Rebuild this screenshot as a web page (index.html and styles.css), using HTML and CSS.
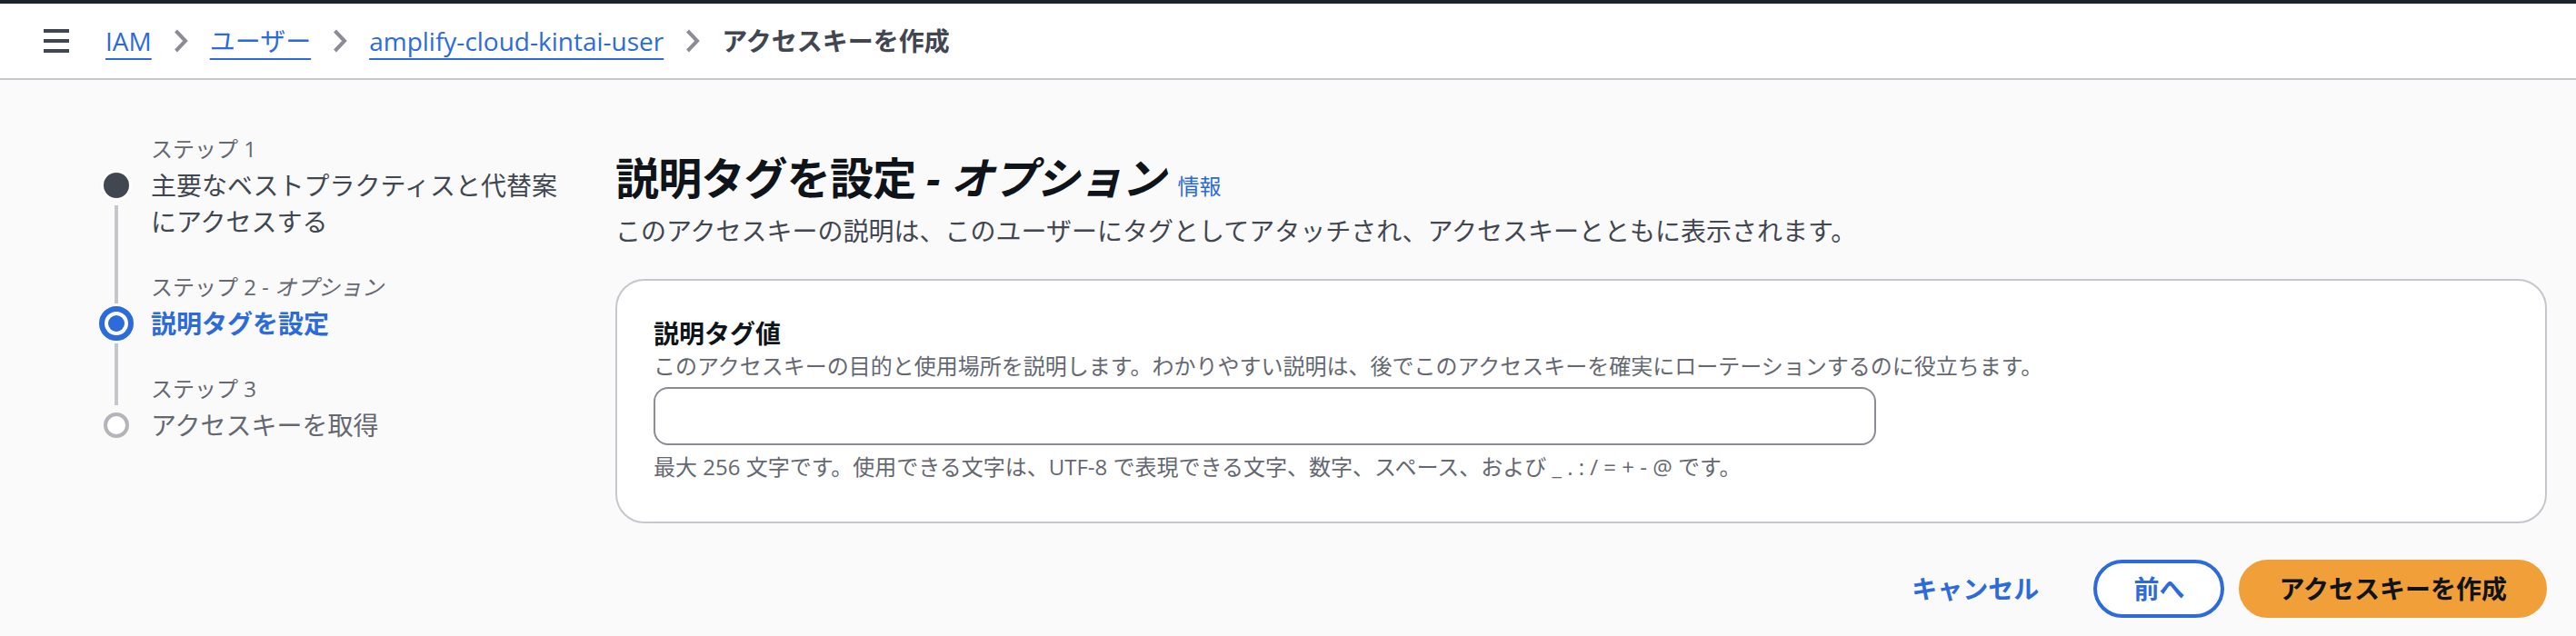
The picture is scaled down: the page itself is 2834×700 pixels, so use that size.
FILE: index.html
```html
<!DOCTYPE html>
<html lang="ja">
<head>
<meta charset="utf-8">
<title>アクセスキーを作成</title>
<link rel="stylesheet" href="styles.css">
</head>
<body>
<div class="topbar"></div>
<header class="header">
  <svg class="menu" width="28" height="28" viewBox="0 0 28 28" aria-hidden="true">
    <rect x="0" y="1" width="28" height="4" fill="#414750"/>
    <rect x="0" y="12" width="28" height="4" fill="#414750"/>
    <rect x="0" y="23" width="28" height="4" fill="#414750"/>
  </svg>
  <nav class="crumbs">
    <a class="crumb-link" href="#">IAM</a>
    <svg class="chev" width="16" height="26" viewBox="0 0 16 26" aria-hidden="true"><path d="M2.5 2 L13 13 L2.5 24" fill="none" stroke="#8c8c94" stroke-width="4"/></svg>
    <a class="crumb-link" href="#">ユーザー</a>
    <svg class="chev" width="16" height="26" viewBox="0 0 16 26" aria-hidden="true"><path d="M2.5 2 L13 13 L2.5 24" fill="none" stroke="#8c8c94" stroke-width="4"/></svg>
    <a class="crumb-link" href="#">amplify-cloud-kintai-user</a>
    <svg class="chev" width="16" height="26" viewBox="0 0 16 26" aria-hidden="true"><path d="M2.5 2 L13 13 L2.5 24" fill="none" stroke="#8c8c94" stroke-width="4"/></svg>
    <span class="crumb-current">アクセスキーを作成</span>
  </nav>
</header>

<div class="wizard">
  <nav class="steps">
    <div class="step">
      <div class="rail"><span class="line line-top hidden"></span><span class="dot-box"><span class="dot dot-done"></span></span><span class="line line-bottom"></span></div>
      <div class="step-text">
        <div class="step-label">ステップ 1</div>
        <div class="step-title">主要なベストプラクティスと代替案にアクセスする</div>
      </div>
    </div>
    <div class="step">
      <div class="rail"><span class="line line-top"></span><span class="dot-box"><span class="dot dot-active"></span></span><span class="line line-bottom"></span></div>
      <div class="step-text">
        <div class="step-label">ステップ 2 <i>- オプション</i></div>
        <div class="step-title step-title-active">説明タグを設定</div>
      </div>
    </div>
    <div class="step step-last">
      <div class="rail"><span class="line line-top"></span><span class="dot-box"><span class="dot dot-pending"></span></span><span class="line line-bottom hidden"></span></div>
      <div class="step-text">
        <div class="step-label">ステップ 3</div>
        <div class="step-title step-title-pending">アクセスキーを取得</div>
      </div>
    </div>
  </nav>

  <main class="content">
    <h1 class="title">説明タグを設定 <i>- オプション</i><a class="info" href="#">情報</a></h1>
    <p class="lead">このアクセスキーの説明は、このユーザーにタグとしてアタッチされ、アクセスキーとともに表示されます。</p>

    <section class="card">
      <label class="field-label" for="desc">説明タグ値</label>
      <div class="field-desc">このアクセスキーの目的と使用場所を説明します。わかりやすい説明は、後でこのアクセスキーを確実にローテーションするのに役立ちます。</div>
      <input class="input" id="desc" type="text">
      <div class="field-hint">最大 256 文字です。使用できる文字は、UTF-8 で表現できる文字、数字、スペース、および _ . : / = + - @ です。</div>
    </section>

    <div class="actions">
      <button class="btn btn-link" type="button">キャンセル</button>
      <button class="btn btn-normal" type="button">前へ</button>
      <button class="btn btn-primary" type="button">アクセスキーを作成</button>
    </div>
  </main>
</div>
</body>
</html>
```

FILE: styles.css
```css
* { box-sizing: border-box; }

html, body {
  margin: 0;
  padding: 0;
}

body {
  background: #fafafa;
  font-family: "Open Sans", "Noto Sans CJK JP", sans-serif;
  color: #0f141a;
  width: 2834px;
  height: 700px;
  overflow: hidden;
}

.topbar {
  height: 4px;
  background: #1b232d;
}

.header {
  height: 84px;
  background: #ffffff;
  border-bottom: 2px solid #c6c6cd;
  display: flex;
  align-items: center;
  padding-left: 48px;
}

.menu {
  flex: none;
  margin-right: 40px;
}

.crumbs {
  display: flex;
  align-items: center;
  gap: 24px;
  font-size: 28px;
  line-height: 40px;
}

.crumb-link {
  color: #2c6bd9;
  text-decoration: underline;
  text-decoration-thickness: 2px;
  text-underline-offset: 8px;
}

.chev { flex: none; }

.crumb-current {
  color: #424650;
  font-weight: 700;
}

.wizard {
  display: grid;
  grid-template-columns: 677px 1fr;
  padding: 60px 32px 0 0;
}

.steps {
  padding-left: 108px;
  display: flex;
  flex-direction: column;
}

.step {
  display: grid;
  grid-template-columns: 40px 460px;
  column-gap: 18px;
}

.step-text { padding-bottom: 36px; }
.step-last .step-text { padding-bottom: 0; }

.rail {
  display: grid;
  grid-template-rows: 36px 40px 1fr;
  justify-items: center;
}

.line {
  width: 4px;
  background: #c6c6cd;
}

.line-top { margin-bottom: 2px; }
.line-bottom { margin-top: 2px; }
.hidden { visibility: hidden; }

.dot-box {
  width: 40px;
  height: 40px;
  display: flex;
  align-items: center;
  justify-content: center;
}

.dot {
  display: block;
  border-radius: 50%;
}

.dot-done {
  width: 28px;
  height: 28px;
  background: #414750;
  box-shadow: 0 0 0 3px #ffffff;
}

.dot-active {
  width: 38px;
  height: 38px;
  border: 6px solid #2c6bd9;
  background: #ffffff;
  display: flex;
  align-items: center;
  justify-content: center;
}

.dot-active::after {
  content: "";
  width: 18px;
  height: 18px;
  border-radius: 50%;
  background: #2c6bd9;
}

.dot-pending {
  width: 28px;
  height: 28px;
  border: 4px solid #b4b4bb;
  background: #ffffff;
}

.step-label {
  font-size: 24px;
  line-height: 32px;
  color: #656871;
  margin-bottom: 4px;
}

.step-title {
  font-size: 28px;
  line-height: 40px;
  color: #414750;
}

.step-title-active {
  color: #2c6bd9;
  font-weight: 700;
}

.step-title-pending { color: #656871; }

.content {
  padding-top: 20px;
}

.title {
  margin: 0;
  font-size: 48px;
  line-height: 56px;
  font-weight: 700;
  letter-spacing: -0.8px;
  color: #0f141a;
}

.info {
  font-size: 24px;
  line-height: 24px;
  font-weight: 400;
  font-style: normal;
  letter-spacing: 0;
  color: #2c6bd9;
  text-decoration: none;
  margin-left: 14px;
}

.lead {
  margin: 10px 0 0;
  font-size: 28px;
  line-height: 40px;
  color: #424650;
}

.card {
  margin-top: 33px;
  background: #ffffff;
  border: 2px solid #c6c6cd;
  border-radius: 32px;
  padding: 38px 40px 44px;
  display: flex;
  flex-direction: column;
}

.field-label {
  font-size: 28px;
  line-height: 40px;
  font-weight: 700;
  color: #0f141a;
}

.field-desc {
  font-size: 24px;
  line-height: 32px;
  color: #656871;
}

.input {
  margin-top: 7px;
  width: 1345px;
  height: 64px;
  border: 2px solid #8c8c94;
  border-radius: 16px;
  background: #ffffff;
  font: inherit;
  font-size: 28px;
  padding: 0 24px;
}

.field-hint {
  margin-top: 8px;
  font-size: 24px;
  line-height: 32px;
  color: #656871;
}

.actions {
  margin-top: 40px;
  display: flex;
  justify-content: flex-end;
  gap: 16px;
}

.btn {
  font-family: inherit;
  font-size: 28px;
  line-height: 40px;
  font-weight: 700;
  padding: 8px 40px;
  border-radius: 40px;
  border: 4px solid transparent;
  background: transparent;
  cursor: pointer;
}

.btn-link {
  color: #2c6bd9;
}

.btn-normal {
  color: #2c6bd9;
  border-color: #2c6bd9;
  background: #ffffff;
}

.btn-primary {
  color: #0f141a;
  background: #f09f39;
  border-color: #f09f39;
}
```
